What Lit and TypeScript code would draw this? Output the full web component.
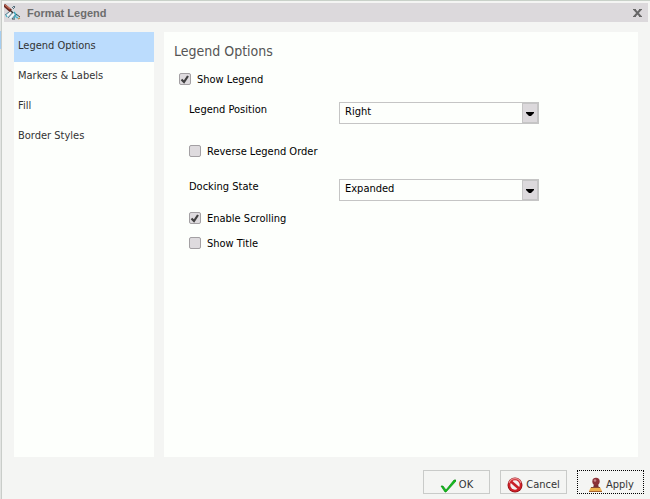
import { LitElement, html, css, svg } from "lit";
import { customElement, state } from "lit/decorators.js";

const pages = ["Legend Options", "Markers & Labels", "Fill", "Border Styles"];

const brushIcon = svg`
  <path d="M1 10l6-5 9 6-1 3-6 2-6-3z" fill="#d3dde2"/>
  <path d="M1 11l4-3M4 14l5-6M8 15l4-5" stroke="#5f7f8e" stroke-width="1"/>
  <path d="M3 12l4-4M6 14l4-4" stroke="#f8fcfd" stroke-width="1.4"/>
  <path d="M10 8l2 3-2 3" stroke="#3fa6bc" stroke-width="1.4"/>
  <path d="M2 11l1 2M12 13l2 1" stroke="#4fb6c8" stroke-width="1.4"/>
  <path d="M8 15h3M12 10l4 3" stroke="#3c4c54" stroke-width="1"/>
  <path d="M0 1l7 6" stroke="#6b2a22" stroke-width="3"/>
  <path d="M1 1l5 4" stroke="#c8705a" stroke-width="1.2"/>
  <path d="M7 7l2 2" stroke="#333" stroke-width="1.4"/>
  <path d="M8 4l2-2 1 1-2 2" stroke="#54707e" stroke-width="1"/>
  <path d="M14 15l2-1" stroke="#b5894a" stroke-width="1.2"/>`;

const okIcon = svg`
  <path d="M1 9h2l3 4L14 3h2v1L6 15H5z" fill="#12c01c" stroke="#0b8a12" stroke-width=".7"/>`;

const cancelIcon = svg`
  <circle cx="8" cy="8" r="7.5" fill="#8d1016"/>
  <circle cx="8" cy="8" r="6.8" fill="#cf2028"/>
  <path d="M2 6a6.3 6.3 0 0 1 12 0" fill="none" stroke="#e9898c" stroke-width="1.3"/>
  <circle cx="8" cy="8" r="4.7" fill="#f4f0f0"/>
  <path d="M4 4.5l8 7" stroke="#c81e26" stroke-width="2.6"/>`;

const stampIcon = svg`
  <path d="M7 7h4l1 4H6z" fill="#7a3034"/>
  <circle cx="9" cy="4.5" r="3.7" fill="#8c3238"/>
  <circle cx="8" cy="3.5" r="1.3" fill="#c98286"/>
  <path d="M4 10h9l2 4H2z" fill="#eeb04c"/>
  <path d="M4 10.5h9" stroke="#8a4a30" stroke-width="1"/>
  <path d="M2 14h13v1H2z" fill="#a8642c"/>`;

@customElement("app-root")
export class AppRoot extends LitElement {
  @state() private page = pages[0];

  static styles = css`
    :host {
      display: block;
      min-height: 100vh;
      box-sizing: border-box;
      padding-left: 1px;
      background: linear-gradient(#e2e4e2 31px, #a5cdf0 31px 49px, #e2e4e2 49px);
      color: #000;
      font: 11px/16px "DejaVu Sans Condensed", Tahoma, sans-serif;
    }
    * { box-sizing: border-box; }
    button, select { font: inherit; color: inherit; }
    .dialog {
      min-height: 100vh;
      border-top: 1px solid #c9d1c9;
      border-left: 1px solid #c9cdc9;
      background: #f4f5f3;
    }
    .titlebar {
      display: flex;
      align-items: center;
      height: 19px;
      margin: 2px 2px 0;
      background: #dcd9dc;
      color: #6d6d6d;
    }
    .titlebar svg { width: 17px; height: 17px; }
    h1 {
      flex: 1;
      margin: 0 0 0 6px;
      font: bold 11px/14px "Liberation Sans", Arial, sans-serif;
    }
    .close {
      display: flex;
      padding: 5px 6px;
      border: 0;
      background: none;
    }
    .titlebar .close svg { width: 9px; height: 8px; }
    .body {
      display: grid;
      grid-template-columns: 140px 1fr;
      gap: 10px;
      padding: 10px 12px 0;
    }
    nav, main { background: #fdfffc; min-height: calc(100vh - 74px); }
    .tab {
      display: block;
      width: 100%;
      height: 30px;
      padding: 0 4px 2px;
      border: 0;
      background: none;
      color: #333;
      text-align: left;
    }
    .tab.active { background: #bbdcfd; }
    main { padding: 10px; }
    h2 {
      margin: 0 0 11px;
      color: #555;
      font-size: 14px;
      font-weight: normal;
      line-height: 18px;
    }
    .check { display: flex; gap: 6px; height: 16px; padding-left: 5px; line-height: 18px; }
    .group { padding-left: 15px; }
    .group .check { padding-left: 0; }
    .row {
      display: grid;
      grid-template-columns: 150px minmax(0, 200px);
      height: 22px;
      margin-top: 15px;
    }
    .group .check + .row { margin-top: 20px; }
    .row + .check { margin-top: 9px; }
    .check + .check { margin-top: 9px; }
    .row + .check.far { margin-top: 19px; }
    input {
      appearance: none;
      width: 12px;
      height: 12px;
      margin: 2px 0 0;
      border: 1px solid #a3a0a3;
      border-radius: 2px;
      background: #dedbde;
    }
    input:checked {
      background: #dedbde url("data:image/svg+xml,%3Csvg xmlns='http://www.w3.org/2000/svg' viewBox='0 0 10 10'%3E%3Cpath d='M1.5 5.5L4 8l4-6' fill='none' stroke='%23404040' stroke-width='2.2'/%3E%3C/svg%3E");
    }
    .pick { position: relative; }
    select {
      appearance: none;
      width: 100%;
      height: 22px;
      padding: 0 20px 3px 5px;
      border: 1px solid #c5c5c5;
      border-radius: 0;
      background: #fdfffc;
    }
    .arrow {
      position: absolute;
      top: 1px;
      right: 1px;
      bottom: 1px;
      width: 16px;
      border: 1px solid #c5c5c5;
      background: #dcd9dc;
      pointer-events: none;
    }
    .arrow svg { display: block; width: 14px; height: 18px; }
    footer {
      display: flex;
      justify-content: flex-end;
      gap: 10px;
      padding: 13px 6px 4px;
    }
    .action {
      display: flex;
      align-items: center;
      justify-content: center;
      gap: 3px;
      width: 67px;
      height: 24px;
      padding: 5px 0 0;
      border: 1px solid #c9cbc9;
      background: #f4f5f3;
      color: #333;
    }
    .action svg { width: 16px; height: 16px; }
    .action.focused { border: 1px dotted #000; }
  `;

  private check(label: string, checked: boolean, far = false) {
    return html`<label class="check ${far ? "far" : ""}"><input type="checkbox" .checked=${checked} />${label}</label>`;
  }

  private pick(id: string, label: string, value: string, others: string[]) {
    return html`<div class="row">
      <label for=${id}>${label}</label>
      <div class="pick">
        <select id=${id}>
          <option selected>${value}</option>
          ${others.map((o) => html`<option>${o}</option>`)}
        </select>
        <span class="arrow"><svg viewBox="0 0 14 18"><path d="M3 8h8v1l-3 3H6L3 9z" fill="#000" /></svg></span>
      </div>
    </div>`;
  }

  render() {
    return html`<div class="dialog">
      <header class="titlebar">
        <svg viewBox="0 0 17 17" fill="none">${brushIcon}</svg>
        <h1>Format Legend</h1>
        <button class="close" aria-label="Close">
          <svg viewBox="0 0 9 8"><path d="M1 0l7 8M8 0L1 8" fill="none" stroke="#666" stroke-width="2" /><path d="M0 0h3v1H0zM6 0h3v1H6zM0 7h3v1H0zM6 7h3v1H6z" fill="#666" /></svg>
        </button>
      </header>
      <div class="body">
        <nav>
          ${pages.map((p) => html`<button class="tab ${p === this.page ? "active" : ""}" @click=${() => (this.page = p)}>${p}</button>`)}
        </nav>
        <main>
          <h2>Legend Options</h2>
          ${this.check("Show Legend", true)}
          <div class="group">
            ${this.pick("position", "Legend Position", "Right", ["Left", "Top", "Bottom"])}
            ${this.check("Reverse Legend Order", false, true)}
            ${this.pick("docking", "Docking State", "Expanded", ["Collapsed"])}
            ${this.check("Enable Scrolling", true)}
            ${this.check("Show Title", false)}
          </div>
        </main>
      </div>
      <footer>
        <button class="action"><svg viewBox="0 0 16 16">${okIcon}</svg>OK</button>
        <button class="action"><svg viewBox="0 0 16 16">${cancelIcon}</svg>Cancel</button>
        <button class="action focused"><svg viewBox="0 0 16 16">${stampIcon}</svg>Apply</button>
      </footer>
    </div>`;
  }
}
